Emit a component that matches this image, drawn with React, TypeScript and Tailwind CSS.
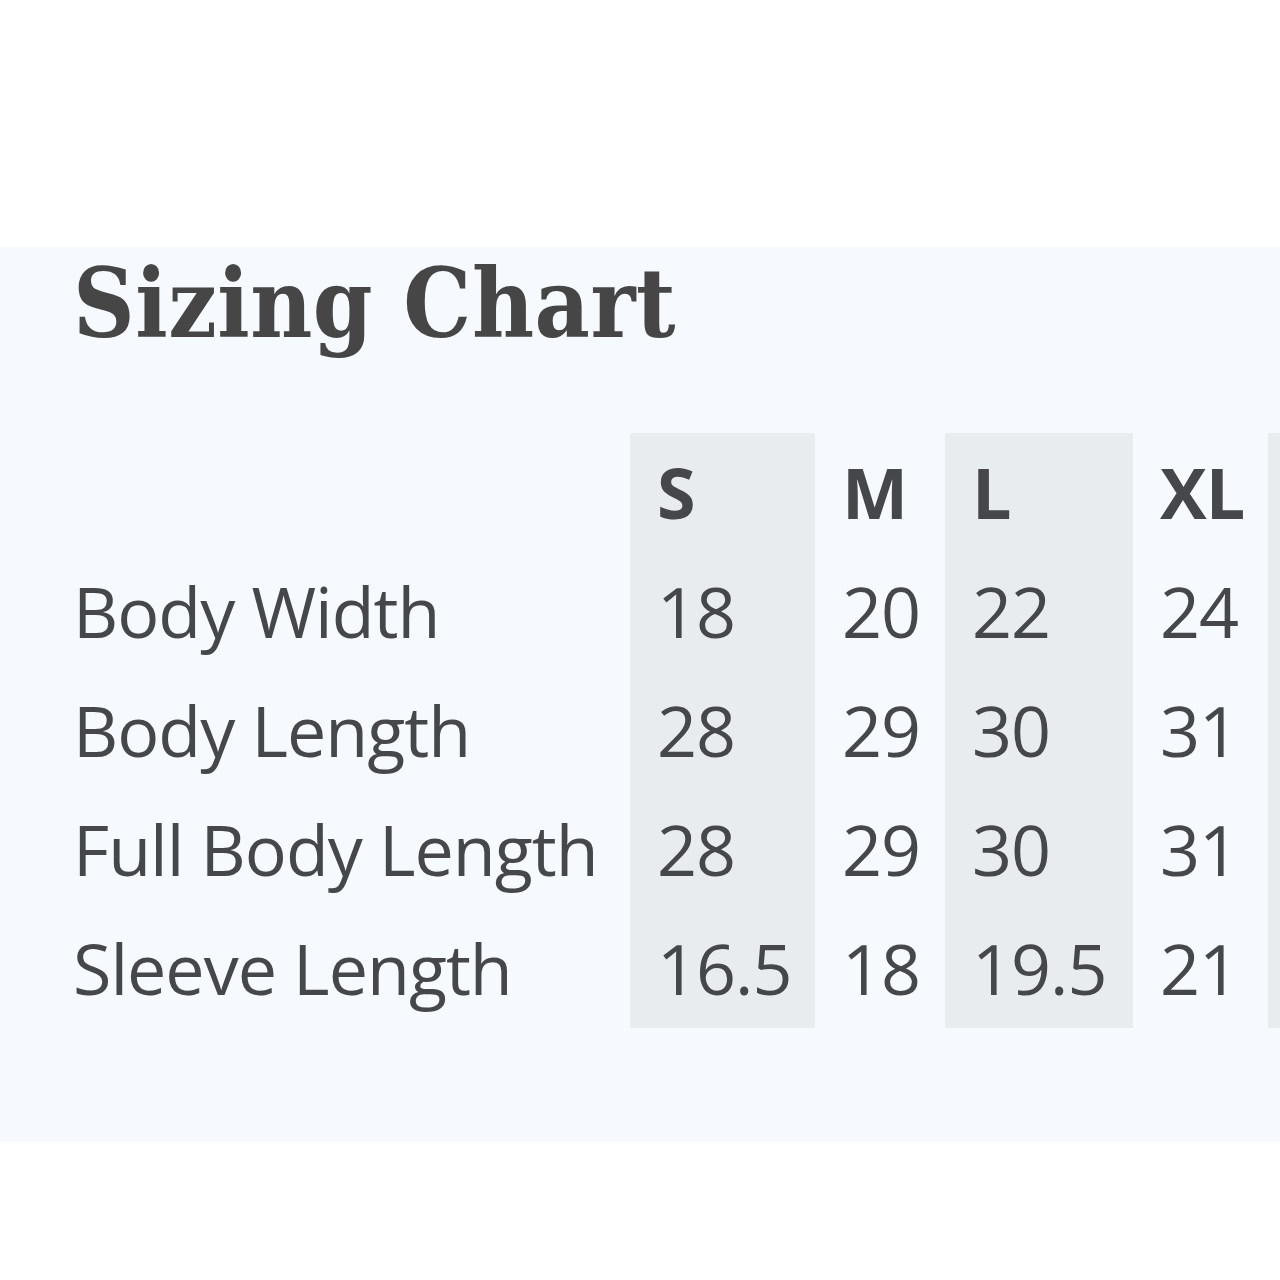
const sizes = ["S", "M", "L", "XL", ""];

const rows: { label: string; values: string[] }[] = [
  { label: "Body Width", values: ["18", "20", "22", "24", ""] },
  { label: "Body Length", values: ["28", "29", "30", "31", ""] },
  { label: "Full Body Length", values: ["28", "29", "30", "31", ""] },
  { label: "Sleeve Length", values: ["16.5", "18", "19.5", "21", ""] },
];

const colWidths = ["w-[185px]", "w-[130px]", "w-[188px]", "w-[135px]", "w-[185px]"];

function cellClass(i: number) {
  return `${colWidths[i]} shrink-0 pl-[27px] ${i % 2 === 0 ? "bg-[#e9ecef]" : ""}`;
}

export default function App() {
  return (
    <div className="min-h-[1280px] bg-white pt-[247px]">
      <section
        className="overflow-hidden bg-[#f6f9fd] pb-[114px] pl-[73px] pt-[2px] text-[#45474a]"
        style={{ fontFamily: '"Open Sans", "Noto Sans", sans-serif' }}
      >
        <h1
          className="text-[95px] font-bold leading-[110px] tracking-[0.5px] text-[#464646]"
          style={{ fontFamily: '"DejaVu Serif Condensed", "DejaVu Serif", serif' }}
        >
          Sizing Chart
        </h1>

        <div className="mt-[74px] text-[70px] leading-[119px] tracking-[-1px]">
          {/* header */}
          <div className="flex">
            <div className="w-[557px] shrink-0" />
            {sizes.map((s, i) => (
              <div key={i} className={`${cellClass(i)} font-bold`}>
                {s || "\u00a0"}
              </div>
            ))}
          </div>
          {rows.map((r) => (
            <div key={r.label} className="flex">
              <div className="w-[557px] shrink-0 whitespace-nowrap">{r.label}</div>
              {r.values.map((v, i) => (
                <div key={i} className={cellClass(i)}>
                  {v || "\u00a0"}
                </div>
              ))}
            </div>
          ))}
        </div>
      </section>
    </div>
  );
}
